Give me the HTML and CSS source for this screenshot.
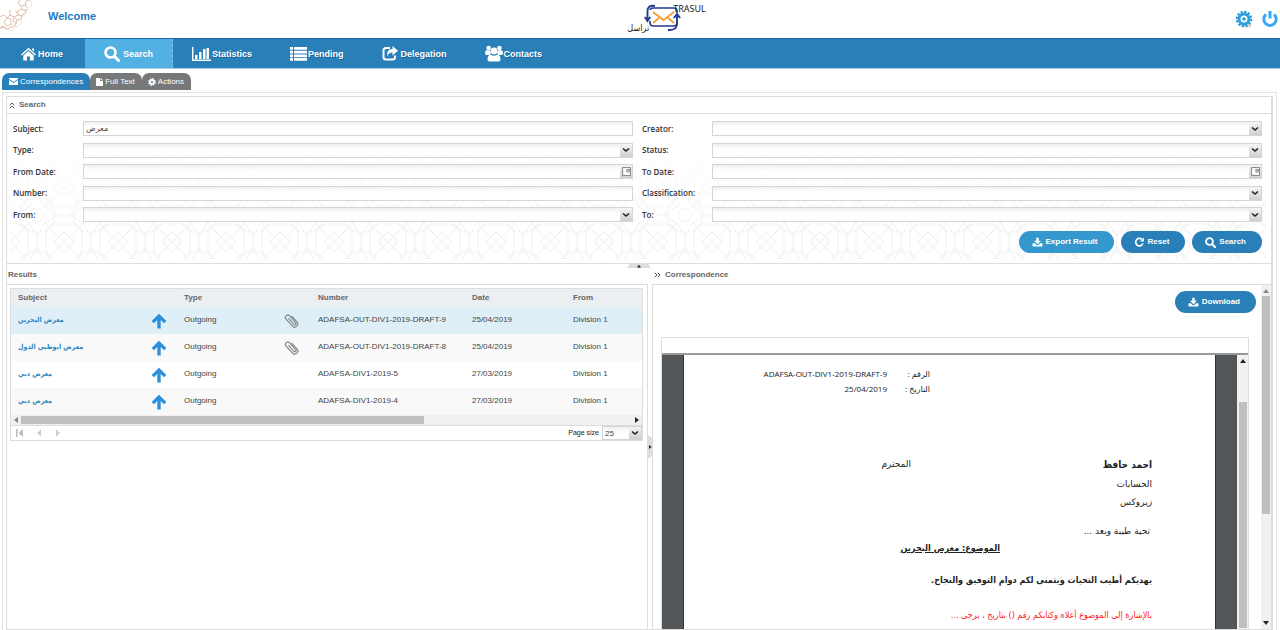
FILE: index.html
```
<!DOCTYPE html>
<html lang="en">
<head>
<meta charset="utf-8">
<title>Trasul</title>
<link rel="stylesheet" href="styles.css">
</head>
<body>
<svg class="defs" width="0" height="0" aria-hidden="true">
  <symbol id="i-search" viewBox="0 0 16 16"><circle cx="6.5" cy="6.5" r="5" fill="none" stroke="currentColor" stroke-width="2.6"/><path d="M10.5 10.5 14.5 14.5" stroke="currentColor" stroke-width="3" stroke-linecap="round"/></symbol>
  <symbol id="i-download" viewBox="0 0 16 16"><path fill="currentColor" d="M6 1h4v5h3.500L8 11.500 2.500 6H6zM1 10h3l3 3h2l3-3h3q1 0 1 1v3q0 1-1 1H1q-1 0-1-1v-3q0-1 1-1z"/></symbol>
  <symbol id="i-reset" viewBox="0 0 16 16"><path fill="none" stroke="currentColor" stroke-width="2.600" d="M13.500 10.500A6 6 0 1 1 12 3.800"/><path fill="currentColor" d="M15 .8V7H8.800z"/></symbol>
  <symbol id="i-chev" viewBox="0 0 8 8"><path fill="none" stroke="currentColor" stroke-width="1.600" d="M1 2.500 4 5 7 2.500"/></symbol>
  <symbol id="i-cal" viewBox="0 0 10 10"><rect x=".7" y=".7" width="8.600" height="8.600" fill="#fff" stroke="#777"/><path d="M5 3h4M5.500 3v2.500H8V3" fill="none" stroke="#777"/></symbol>
  <symbol id="i-up" viewBox="0 0 16 16"><path fill="#2b8fd9" d="M8 .8 15.300 8l-2.200 2.300L9.700 7v8.500H6.300V7l-3.400 3.300L.7 8z"/></symbol>
  <symbol id="i-clip" viewBox="0 0 16 16"><path fill="none" stroke="#7f8384" stroke-width="1.200" stroke-linecap="round" d="M5 6 10.500 12.200a1.200 1.200 0 0 0 2-1.700L6 3a2.600 2.600 0 0 0-4 3.300l6.800 7.500a3.300 3.300 0 0 0 5.200-4.200L8.500 3.500"/></symbol>
</svg>

<div class="app">
  <header class="top">
    <svg class="ornament" width="34" height="32" viewBox="0 0 34 32" fill="none" stroke="#dfbfab" aria-hidden="true">
      <path d="M0 17l4-2 3 3 3-3 4 2-1 4 3 2-2 4-4 0-3 3-3-3-4 1M7 18l-3 4 3 4 4-2 0-5zM14 17l4-2 0-4 4-2 3 2 3-2M14 17l3 3 4-1 1-4 4-2-1-4M16 11l2 4 5 1M20 0l-2 3 3 3 4-1 1-4 4-1M21 6l1 4M25 5l3 3M17 20l-1 4M0 28l3-2 4 3M10 15l0-5"/>
      <path stroke="#f3e4db" d="M11 24l5 3 5-3 0-5M23 16l4 0M28 9l4-4-1-5M7 29l4 2 4-2"/>
    </svg>
    <span class="welcome">Welcome</span>
    <div class="logo">
      <span class="logo-ar" lang="ar">تراسل</span>
      <svg width="38" height="28" viewBox="0 0 38 28" fill="none" aria-hidden="true">
        <rect x="5" y="4" width="27" height="18" rx="3" stroke="#223a8f" stroke-width="1.700"/>
        <path d="M8 8l10.500 8L29 8M8 19l6-5M29 19l-6-5" stroke="#f5a033" stroke-width="1.800"/>
        <path d="M5 6v11M32 9v10" stroke="#fff" stroke-width="3"/>
        <path d="M10 2C4 1 2.500 4 2.500 7v9M-.2 13l2.700 4 2.700-4M23 26c8 .5 9-3 9-7v-8M28.800 14l3.200-4 3.200 4" stroke="#223a8f" stroke-width="1.900"/>
      </svg>
      <span class="logo-en">TRASUL</span>
    </div>
    <div class="top-actions">
      <button class="plain" aria-label="Settings"><svg width="18" height="18" viewBox="0 0 18 18" fill="none"><ellipse cx="11" cy="15.500" rx="6" ry="2" fill="#ddd"/><circle cx="9" cy="9" r="7.200" stroke="#1f94d4" stroke-width="2" stroke-dasharray="2.200 1.570"/><circle cx="9" cy="9" r="5" stroke="#2a9fdc" stroke-width="3"/><circle cx="9" cy="9" r="1.800" fill="#2a9fdc"/></svg></button>
      <button class="plain" aria-label="Log out"><svg width="18" height="18" viewBox="0 0 18 18" fill="none" stroke="#3ba7f5" stroke-width="3"><path d="M5 4.500a6.200 6.200 0 1 0 8 0M9 1v7.500"/></svg></button>
    </div>
  </header>

  <nav class="nav">
    <a href="#"><svg width="15" height="14" viewBox="0 0 15 14" fill="#fff"><path d="M7.500.8 15 7.400l-.9 1L7.500 2.700.9 8.400l-.9-1zM2.300 8.500l5.200-4.600 5.200 4.600V13.500H9V9.500H6v4H2.300zM11 1.500h2V4.500l-2-1.700z"/></svg><span class="wide">Home</span></a>
    <a href="#" class="on"><svg width="16" height="16"><use href="#i-search"/></svg><span>Search</span></a>
    <a href="#"><svg width="19" height="14" viewBox="0 0 19 14" fill="#fff"><path d="M0 0h1.400v12.600H19V14H0zM3 8h2.500v4H3zM7 5h2.500v7H7zM11 2h2.500v10H11zM14.500 1H17v11h-2.500z"/></svg><span>Statistics</span></a>
    <a href="#"><svg width="17" height="14" viewBox="0 0 17 14" fill="#fff"><path d="M0 0h3v2.800H0zM4 0h13v2.800H4zM0 3.700h3v2.800H0zM4 3.700h13v2.800H4zM0 7.400h3v2.800H0zM4 7.400h13v2.800H4zM0 11h3v2.800H0zM4 11h13v2.800H4z"/></svg><span>Pending</span></a>
    <a href="#"><svg width="17" height="15" viewBox="0 0 17 15"><path d="M8 2H4Q1.500 2 1.500 4.500v6.800Q1.500 13.500 4 13.500h6.500Q13 13.500 13 11V9.500" fill="none" stroke="#fff" stroke-width="2"/><path d="M10.500 0 16 4.800l-5.500 4.700V6.500Q7 6 5.500 10.500 4 3.200 10.500 3z" fill="#fff"/></svg><span class="wide">Delegation</span></a>
    <a href="#"><svg width="18" height="17" viewBox="0 0 18 17" fill="#fff"><circle cx="3.600" cy="3" r="2.300"/><circle cx="14.400" cy="3" r="2.300"/><path d="M0 8q0-3 2-2.700h3L6 8 4.500 10H1.500Q0 9.800 0 8zM18 8q0-3-2-2.700h-3L12 8l1.500 2h3Q18 9.800 18 8z"/><circle cx="9" cy="6" r="3.400"/><path d="M2.500 14.500Q2.500 9.600 5.500 9.400 9 12 12.500 9.400q3 .2 3 5.100 0 2-2 2h-9q-2 0-2-2z"/></svg><span>Contacts</span></a>
  </nav>

  <div class="tabs">
    <button class="tab on"><svg width="9" height="7" viewBox="0 0 9 7" fill="#fff"><path d="M0 0h9v1L4.500 4 0 1zM0 2l4.500 3L9 2v5H0z"/></svg>Correspondences</button>
    <button class="tab"><svg width="7" height="8" viewBox="0 0 7 8" fill="#fff"><path d="M0 0h4v3h3v5H0zM4.700 0 7 2.300H4.700z"/></svg>Full Text</button>
    <button class="tab"><svg width="8" height="8" viewBox="0 0 8 8" fill="none" stroke="#fff"><circle cx="4" cy="4" r="2" stroke-width="1.800"/><circle cx="4" cy="4" r="3.200" stroke-width="1.400" stroke-dasharray="1.500 1.010"/></svg>Actions</button>
  </div>

  <main class="outer">
    <div class="inner">
      <section class="searchbox">
        <h2 class="title"><svg width="6" height="7" viewBox="0 0 6 7" fill="none" stroke="#555"><path d="M.7 3.200 3 1l2.300 2.200M.7 6.300 3 4.100l2.300 2.200"/></svg>Search</h2>
        <form class="form">
          <svg class="pattern" aria-hidden="true">
            <defs>
              <pattern id="geo" width="54" height="54" patternUnits="userSpaceOnUse">
                <g fill="none" stroke="#f3f3f3" stroke-width="1.200">
                  <circle cx="27" cy="27" r="7"/><path d="M20 10h14l10 10v14L34 44H20L10 34V20zM27 5l8 14 14 8-14 8-8 14-8-14-14-8 14-8zM0 0l20 20M54 0 34 20M0 54l20-20M54 54 34 34M27 0v10M27 44v10M0 27h10M44 27h10M0 10 10 0M44 0l10 10M0 44l10 10M44 54l10-10M0 18h10L18 10V0M54 18H44L36 10V0M0 36h10l8 8v10M54 36H44l-8 8v10"/>
                </g>
              </pattern>
              <linearGradient id="fade" x1="0" y1="0" x2="0" y2="1"><stop offset=".1" stop-color="#000"/><stop offset=".75" stop-color="#fff"/></linearGradient>
              <mask id="fadeMask"><rect width="100%" height="100%" fill="url(#fade)"/></mask>
            </defs>
            <rect width="100%" height="100%" fill="url(#geo)" mask="url(#fadeMask)"/>
          </svg>
          <div class="cols">
            <div class="fields">
              <label for="f1">Subject:</label><div class="ctl"><input id="f1" value="معرض"></div>
              <label for="f2">Type:</label><div class="ctl"><select id="f2"><option></option></select><span class="arr"><svg width="8" height="8"><use href="#i-chev"/></svg></span></div>
              <label for="f3">From Date:</label><div class="ctl"><input id="f3"><button type="button" class="arr" aria-label="Pick from date"><svg width="9" height="9"><use href="#i-cal"/></svg></button></div>
              <label for="f4">Number:</label><div class="ctl"><input id="f4"></div>
              <label for="f5">From:</label><div class="ctl"><select id="f5"><option></option></select><span class="arr"><svg width="8" height="8"><use href="#i-chev"/></svg></span></div>
            </div>
            <div class="fields">
              <label for="g1">Creator:</label><div class="ctl"><select id="g1"><option></option></select><span class="arr"><svg width="8" height="8"><use href="#i-chev"/></svg></span></div>
              <label for="g2">Status:</label><div class="ctl"><select id="g2"><option></option></select><span class="arr"><svg width="8" height="8"><use href="#i-chev"/></svg></span></div>
              <label for="g3">To Date:</label><div class="ctl"><input id="g3"><button type="button" class="arr" aria-label="Pick to date"><svg width="9" height="9"><use href="#i-cal"/></svg></button></div>
              <label for="g4">Classification:</label><div class="ctl"><select id="g4"><option></option></select><span class="arr"><svg width="8" height="8"><use href="#i-chev"/></svg></span></div>
              <label for="g5">To:</label><div class="ctl"><select id="g5"><option></option></select><span class="arr"><svg width="8" height="8"><use href="#i-chev"/></svg></span></div>
            </div>
          </div>
          <div class="buttons">
            <button type="button" class="btn light"><svg width="11" height="10"><use href="#i-download"/></svg>Export Result</button>
            <button type="button" class="btn"><svg width="11" height="10"><use href="#i-reset"/></svg>Reset</button>
            <button type="button" class="btn"><svg width="11" height="11"><use href="#i-search"/></svg>Search</button>
          </div>
        </form>
        <button class="grip-h" aria-label="Collapse search"><svg width="24" height="4" viewBox="0 0 24 4"><path d="M3 0h18l3 4H0z" fill="#ddd"/><path d="M12 .8 14 3.500h-4z" fill="#222"/></svg></button>
      </section>

      <div class="panes">
        <section class="pane results">
          <h2 class="title">Results</h2>
          <div class="body">
            <div class="grid">
              <table>
                <colgroup><col class="c1"><col class="c2"><col class="c3"><col class="c4"><col class="c5"><col class="c6"><col></colgroup>
                <thead><tr><th>Subject</th><th></th><th>Type</th><th></th><th>Number</th><th>Date</th><th>From</th></tr></thead>
                <tbody>
                  <tr class="sel"><td><a href="#" lang="ar">معرض البحرين</a></td><td class="ic"><svg width="16" height="16"><use href="#i-up"/></svg></td><td>Outgoing</td><td class="ic"><svg width="15" height="15"><use href="#i-clip"/></svg></td><td>ADAFSA-OUT-DIV1-2019-DRAFT-9</td><td>25/04/2019</td><td>Division 1</td></tr>
                  <tr><td><a href="#" lang="ar">معرض ابوظبي الدول</a></td><td class="ic"><svg width="16" height="16"><use href="#i-up"/></svg></td><td>Outgoing</td><td class="ic"><svg width="15" height="15"><use href="#i-clip"/></svg></td><td>ADAFSA-OUT-DIV1-2019-DRAFT-8</td><td>25/04/2019</td><td>Division 1</td></tr>
                  <tr><td><a href="#" lang="ar">معرض دبي</a></td><td class="ic"><svg width="16" height="16"><use href="#i-up"/></svg></td><td>Outgoing</td><td></td><td>ADAFSA-DIV1-2019-5</td><td>27/03/2019</td><td>Division 1</td></tr>
                  <tr><td><a href="#" lang="ar">معرض دبي</a></td><td class="ic"><svg width="16" height="16"><use href="#i-up"/></svg></td><td>Outgoing</td><td></td><td>ADAFSA-DIV1-2019-4</td><td>27/03/2019</td><td>Division 1</td></tr>
                </tbody>
              </table>
              <div class="hbar"><svg width="10" height="6" viewBox="0 0 10 6"><path d="M7 0v6L3 3z" fill="#888"/></svg><div class="htrack"><div class="hthumb"></div></div><svg width="10" height="6" viewBox="0 0 10 6"><path d="M3 0v6l4-3z" fill="#222"/></svg></div>
              <div class="pager">
                <button class="plain" aria-label="First page"><svg width="8" height="8" viewBox="0 0 8 8" fill="#bbb"><path d="M0 0h1.500v8H0zM7 0v8L2.500 4z"/></svg></button>
                <button class="plain" aria-label="Previous page"><svg width="8" height="8" viewBox="0 0 8 8"><path d="M6 .5v7L2 4z" fill="#ccc"/></svg></button>
                <button class="plain" aria-label="Next page"><svg width="8" height="8" viewBox="0 0 8 8"><path d="M2 .5v7L6 4z" fill="#ccc"/></svg></button>
                <label for="ps">Page size</label>
                <div class="ctl"><select id="ps"><option>25</option></select><span class="arr"><svg width="8" height="8"><use href="#i-chev"/></svg></span></div>
              </div>
            </div>
          </div>
        </section>
        <button class="grip-v" aria-label="Collapse correspondence"><svg width="4" height="24" viewBox="0 0 4 24"><path d="M0 0l4 3v18l-4 3z" fill="#ddd"/><path d="M1 10l2.600 2L1 14z" fill="#222"/></svg></button>
        <section class="pane">
          <h2 class="title"><svg width="7" height="6" viewBox="0 0 7 6" fill="none" stroke="#555"><path d="M.7.700 3 3 .7 5.300M3.700.700 6 3 3.700 5.300"/></svg>Correspondence</h2>
          <div class="body split">
            <div class="preview">
              <button class="btn dl"><svg width="11" height="10"><use href="#i-download"/></svg>Download</button>
              <div class="viewer">
                <div class="viewer-bar"></div>
                <div class="stage">
                  <article class="letter" dir="rtl" lang="ar">
                    <dl class="ref"><dt>الرقم :</dt><dd dir="ltr">ADAFSA-OUT-DIV1-2019-DRAFT-9</dd><dt>التاريخ :</dt><dd dir="ltr">25/04/2019</dd></dl>
                    <div class="to"><strong>احمد حافظ</strong><span>المحترم</span></div>
                    <p class="line">الحسابات</p>
                    <p class="line">زيروكس</p>
                    <p class="greet">تحية طيبة وبعد ...</p>
                    <p class="subj">الموضوع: معرض البحرين</p>
                    <p class="bold">يهديكم أطيب التحيات ويتمنى لكم دوام التوفيق والنجاح.</p>
                    <p class="red">بالإشارة إلى الموضوع أعلاه وكتابكم رقم () بتاريخ ، يرجى ...</p>
                  </article>
                  <div class="vbar"><svg width="10" height="10" viewBox="0 0 10 10"><path d="M2 7 5 3l3 4z" fill="#222"/></svg><div class="vthumb low"></div></div>
                </div>
              </div>
            </div>
            <div class="vbar"><svg width="10" height="10" viewBox="0 0 10 10"><path d="M2 7 5 3l3 4z" fill="#888"/></svg><div class="vthumb"></div><svg width="10" height="10" viewBox="0 0 10 10"><path d="M2 3 5 7l3-4z" fill="#222"/></svg></div>
          </div>
        </section>
      </div>
    </div>
  </main>
</div>
</body>
</html>
```
FILE: styles.css
```
* { box-sizing: border-box; }
body { margin: 0; background: #fff; color: #444; font: 8px/12px "Liberation Sans", Arial, "DejaVu Sans", sans-serif; }
button, input, select { font: inherit; color: inherit; margin: 0; padding: 0; border: 0; background: none; border-radius: 0; outline: 0; }
h2, p, dl, dd { margin: 0; }
a { text-decoration: none; }
svg { display: block; flex: none; }
.defs { position: absolute; }
.plain { line-height: 0; }

.app { height: 100vh; display: flex; flex-direction: column; overflow: hidden; }
.top { height: 38px; flex: none; display: grid; grid-template-columns: 1fr auto 1fr; position: relative; }
.ornament { position: absolute; left: 0; top: 0; }
.welcome { padding: 9px 0 0 48px; font-size: 11px; line-height: 14px; font-weight: bold; color: #1d78c1; }
.logo { display: flex; padding: 4px 0 0 53px; color: #222; }
.logo svg { overflow: visible; }
.logo-ar { align-self: flex-end; margin: 0 -4px 4px 0; font: 9px/12px "DejaVu Sans Condensed", "DejaVu Sans", sans-serif; }
.logo-en { font: 9px/10px "Noto Sans", sans-serif; margin-left: -10px; }
.top-actions { display: flex; justify-content: flex-end; align-items: center; gap: 8px; padding-right: 1px; }

.nav { height: 31px; flex: none; display: flex; background: #2980b9; border: 1px solid #1769a8; border-width: 1px 0; border-bottom-color: #a9cfe8; }
.nav a { display: flex; align-items: center; gap: 1px; padding: 0 19px; color: #fff; font-size: 9px; font-weight: bold; text-shadow: 1px 1px #1b6297; }
.nav a:first-child { padding: 0 22px 0 21px; }
.nav .on { background: #53b0e2; gap: 3px; border-right: 1px dashed #7cc5ec; text-shadow: none; }

.tabs { display: flex; flex: none; padding: 4px 2px 2px; }
.tab { display: flex; align-items: center; gap: 2px; height: 17px; padding: 0 7px 0 6px; border-radius: 7px 7px 0 0; background: #77787a; color: #fff; }
.tab.on { background: #2980b9; padding: 0 7px; }

.outer { flex: 1; min-height: 0; margin: 0 3px 0 2px; border: 1px solid #e3e3e3; border-bottom: 0; padding: 3px 3px 0; display: flex; flex-direction: column; }
.inner { flex: 1; min-height: 0; display: flex; flex-direction: column; border: 1px solid #ddd; border-right-width: 2px; }
.title { display: flex; align-items: center; gap: 4px; height: 16px; padding-left: 2px; font-size: 8px; font-weight: bold; color: #666; }
.searchbox { position: relative; flex: none; border-bottom: 1px solid #ddd; }
.form { position: relative; border-top: 1px solid #ddd; padding: 7px 9px 10px 6px; }
.pattern { position: absolute; left: 3px; top: 20px; width: calc(100% - 8px); height: calc(100% - 24px); }
.cols, .buttons { position: relative; display: flex; gap: 9px; }
.fields { flex: 1; min-height: 101px; display: grid; grid-template-columns: 70px 1fr; align-content: space-between; align-items: center; }
.fields label { font: 600 8px/12px "Open Sans", "Noto Sans", sans-serif; color: #333; }
.ctl { display: flex; height: 15px; border: 1px solid #d3d5d6; background: linear-gradient(#edf0f1, #fff 40%); position: relative; }
.ctl input, .ctl select { flex: 1; min-width: 0; appearance: none; padding: 0 2px; height: 13px; }
.arr { width: 12px; display: flex; align-items: center; justify-content: center; background: linear-gradient(#f5f5f5, #cfcfcf); color: #222; pointer-events: none; }
.buttons { justify-content: flex-end; gap: 7px; padding-top: 9px; }
.btn { display: flex; align-items: center; gap: 3px; height: 22px; padding: 0 16px 0 13px; border-radius: 11px; background: #2980b9; color: #fff; font-weight: bold; }
.btn.light { background: #3498cf; }
.wide { padding-left: 1px; }
.grip-h { position: absolute; left: 50%; bottom: -5px; margin-left: -12px; }

.panes { flex: 1; min-height: 0; display: grid; grid-template-columns: 642fr 4px 620fr; }
.pane { min-width: 0; min-height: 0; display: flex; flex-direction: column; padding-top: 3px; }
.pane .title { margin-bottom: 1px; }
.results .title { padding-left: 1px; }
.body { flex: 1; min-height: 0; border: 1px solid #ddd; border-width: 1px 1px 0 0; }
.grip-v { align-self: center; z-index: 1; }
.grid { margin: 3px 4px 0 3px; border: 1px solid #ddd; }
table { width: 100%; table-layout: fixed; border-collapse: collapse; color: #444; }
.c1 { width: 136px; } .c2 { width: 30px; } .c3 { width: 101px; } .c4 { width: 33px; } .c5 { width: 154px; } .c6 { width: 101px; }
th { height: 18px; padding: 0 0 0 7px; text-align: left; background: #eceff1; color: #666; }
td { height: 27px; padding: 0 0 2px 7px; white-space: nowrap; }
td a { font: bold 7px/12px "DejaVu Sans Condensed", "DejaVu Sans", sans-serif; color: #2f86bf; }
td.ic { padding: 0 7px 2px 0; }
.ic svg { margin: 2px auto 0; }
tbody tr:nth-child(even) { background: #f9f9f9; }
tbody .sel { background: #dfeff7; }
.hbar { display: flex; align-items: center; height: 11px; background: #f0f0f0; border-bottom: 1px solid #ddd; }
.htrack { flex: 1; height: 8px; }
.hthumb { width: 66%; height: 8px; background: #bfbfbf; }
.pager { display: flex; align-items: center; gap: 11px; height: 14px; padding-left: 5px; }
.pager label { margin-left: auto; margin-right: -8px; font-size: 7px; color: #222; }
.pager .ctl { width: 40px; height: 14px; }

.split { display: flex; border-width: 1px 0 0 1px; }
.preview { flex: 1; min-width: 0; display: flex; flex-direction: column; padding: 6px 12px 0 8px; }
.dl { align-self: flex-end; margin-right: -7px; flex: none; }
.viewer { flex: 1; min-height: 0; margin-top: 24px; display: flex; flex-direction: column; border: 1px solid #ddd; border-bottom: 0; }
.viewer-bar { height: 17px; flex: none; border-bottom: 2px solid #999; }
.stage { flex: 1; min-height: 0; display: flex; overflow: hidden; background: #525659; padding-left: 22px; }
.letter { flex: 1; min-width: 0; margin-right: 22px; padding: 11px 63px 0; background: #fff; color: #222; font: 9px/15px "DejaVu Sans", sans-serif; outline: 1px solid #333; }
.ref { display: grid; grid-template-columns: 43px auto; justify-content: start; margin-right: 222px; font: 8px/15px "Open Sans", "Noto Sans", "DejaVu Sans", sans-serif; }
.ref dd { text-align: right; }
.to { display: grid; grid-template-columns: 241px 1fr; margin-top: 61px; margin-bottom: 3px; }
.to strong { font: bold 10px/15px "DejaVu Sans Condensed", "DejaVu Sans", sans-serif; }
.line { line-height: 18px; }
.greet { margin: 13px 2px 0; }
.subj { margin: 2px 152px 0 0; font-weight: bold; text-decoration: underline; }
.bold { margin-top: 17px; font-weight: bold; white-space: nowrap; }
.subj, .bold, .red { font-family: "DejaVu Sans Condensed", "DejaVu Sans", sans-serif; }
.red { margin-top: 20px; color: #f22; white-space: nowrap; }
.vbar { width: 11px; flex: none; display: flex; flex-direction: column; align-items: center; background: #f1f1f1; padding: 1px 0; }
.split > .vbar { width: 10px; }
.vthumb { width: 8px; height: 218px; background: #bfbfbf; margin-bottom: auto; }
.vthumb.low { height: auto; flex: 1; margin: 36px 0 0; }
```
